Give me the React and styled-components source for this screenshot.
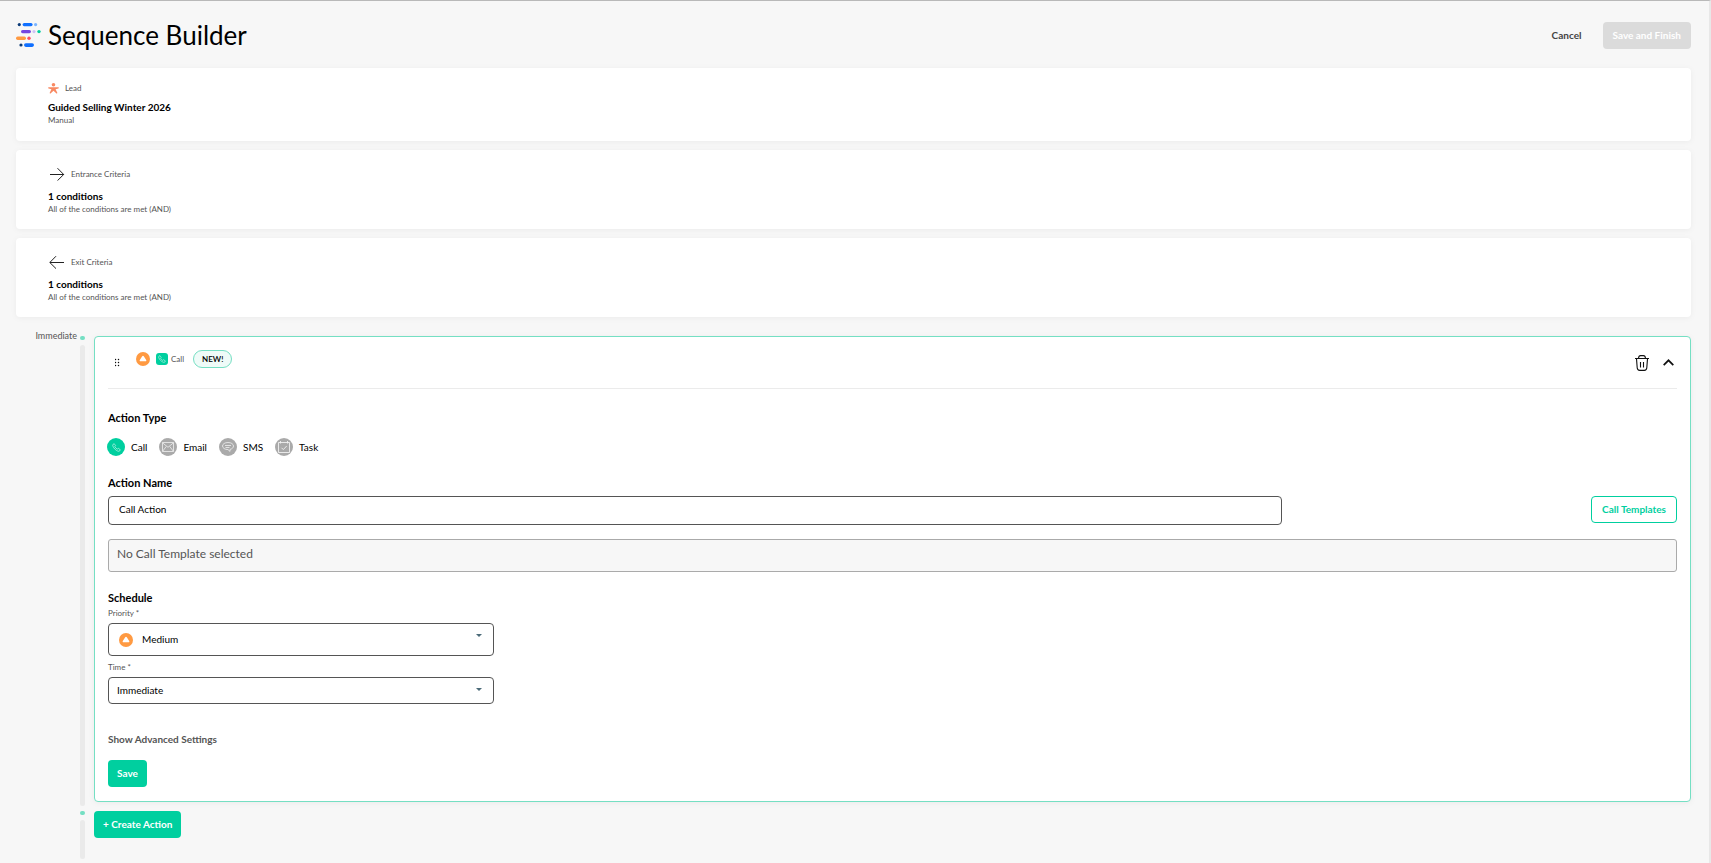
import * as React from "react"
import styled, { createGlobalStyle, css } from "styled-components"



const GlobalStyle = createGlobalStyle`
* {
  box-sizing: border-box;
}

body {
  margin: 0;
  background: #f7f7f7;
  color: #000;
  font-family: Lato, "Noto Sans", sans-serif;
  font-size: 10px;
  line-height: 14px;
}

button, input, select {
  font: inherit;
  color: inherit;
}

h1, h2, h3, p {
  margin: 0;
}
`

// Styled Components
const Main = styled.main`
min-height: 100vh;
border-top: 1px solid #b9b9b9;
border-right: 2px solid #e8e8e8;
padding: 0 18px 2px 16px;
display: flex;
flex-direction: column;
`

const Header = styled.header`
height: 67px;
padding-top: 2px;
display: flex;
align-items: center;
gap: 7px;

h1 {
  flex: 1;
  padding-bottom: 1px;
  font-size: 26px;
  line-height: 36px;
  font-weight: 400;
}
`

const Button = styled.button`
height: 27px;
padding: 0 8px 2px;
border: 1px solid transparent;
border-radius: 4px;
background: #00cf9f;
color: #fff;
font-weight: 700;
white-space: nowrap;
cursor: pointer;

${({ $variant }) => $variant === "outline" && css`
  padding: 0 10px 2px;
  background: #fff;
  border-color: #00cf9f;
  color: #00cf9f;
`}

${({ $variant }) => $variant === "text" && css`
  background: none;
  color: #444;
  margin-right: 5px;
`}

&:disabled {
  padding: 0 9px 2px;
  background: #dbdbdb;
  color: #fff;
  cursor: default;
}
`

const Card = styled.section`
margin-bottom: 9px;
padding: ${({ $tall }) => ($tall ? "15px 32px 14px" : "13px 32px 15px")};
background: #fff;
border-radius: 4px;
box-shadow: 0 1px 6px rgba(0, 0, 0, 0.05);

h2 {
  font-size: 10px;
  line-height: 14px;
}

p {
  color: #555;
  font-size: 8px;
  line-height: 12px;
}
`

const CardLabel = styled.div`
display: flex;
align-items: center;
gap: 6px;
height: ${({ $tall }) => ($tall ? "17px" : "14px")};
margin-bottom: ${({ $tall }) => ($tall ? "7px" : "5px")};
color: #555;
font-size: 8px;
line-height: 12px;
`

const Timeline = styled.div`
margin-top: 10px;
display: grid;
grid-template-columns: 61px 5px 1fr;
column-gap: 3px;
row-gap: 9px;
`

const When = styled.span`
color: #555;
font-size: 9px;
line-height: 12px;
height: 1px;
margin-top: -6px;
text-align: right;
`

const Rail = styled.div`
display: flex;
flex-direction: column;
gap: 5px;
margin-bottom: -4px;

&::before {
  content: "";
  height: 4px;
  border-radius: 2px;
  background: #75dfc3;
}

&::after {
  content: "";
  flex: 1;
  border-radius: 3px;
  background: #eaeaea;
}
`

const Step = styled.div`
margin-left: 6px;
min-height: ${({ $last }) => ($last ? "44px" : "0")};
`

const ActionCard = styled.form`
border: 1px solid #75dfc3;
border-radius: 4px;
background: #fff;
padding: 0 13px 14px;
box-shadow: 0 1px 6px rgba(0, 0, 0, 0.05);

h3 {
  font-size: 11px;
  line-height: 16px;
}
`

const ActionHeader = styled.div`
height: 52px;
border-bottom: 1px solid #ebebeb;
display: flex;
align-items: center;
padding: 0 3px 0 7px;
`

const Tags = styled.div`
flex: 1;
display: flex;
align-items: center;
gap: 6px;
padding: 0 0 7px 16px;
color: #555;
font-size: 8px;
`

const CallTag = styled.span`
display: flex;
align-items: center;
gap: 3px;
`

const Badge = styled.span`
margin-left: 3px;
padding: 1px 8px;
border: 1px solid #75dfc3;
border-radius: 9px;
background: #effbf8;
color: #000;
font-weight: 600;
`

const IconButton = styled.button`
display: flex;
align-items: center;
padding: 0;
border: 0;
margin-left: ${({ $gap }) => $gap || 0}px;
background: none;
cursor: pointer;
`

const Square = styled.span`
width: 12px;
height: 12px;
border-radius: 3px;
background: #00cf9f;
display: grid;
place-items: center;
`

const TypeGroup = styled.fieldset`
margin: 21px 0 0 -1px;
padding: 0;
border: 0;
min-width: 0;
display: flex;
flex-wrap: wrap;
gap: 12px;

legend {
  padding: 0 0 0 1px;
  margin-bottom: 12px;
  font-size: 11px;
  line-height: 16px;
  font-weight: 700;
}
`

const TypeOption = styled.label`
display: flex;
align-items: center;
gap: 6px;
cursor: pointer;

input {
  appearance: none;
  position: absolute;
  margin: 0;
}

input:checked + span {
  background: #00cf9f;
}
`

const Circle = styled.span`
width: 18px;
height: 18px;
border-radius: 50%;
background: #aaa;
display: grid;
place-items: center;
`

const FieldTitle = styled.label`
display: block;
margin-top: 19px;
font-size: 11px;
line-height: 16px;
font-weight: 700;
`

const NameRow = styled.div`
display: flex;
justify-content: space-between;
align-items: flex-start;
margin-top: 5px;
`

const NameInput = styled.input`
width: calc(75% - 3px);
height: 29px;
padding: 0 10px 3px;
border: 1px solid #555;
border-radius: 4px;
background: #fff;
`

const Template = styled.p`
margin-top: 14px;
height: 33px;
padding: 6px 8px;
border: 1px solid #aaa;
border-radius: 3px;
background: #f7f7f7;
color: #555;
font-size: 12px;
line-height: 16px;
`

const Schedule = styled.div`
width: 386px;
max-width: 100%;
margin-top: 18px;
display: flex;
flex-direction: column;
`

const SmallLabel = styled.label`
color: #555;
font-size: 8px;
line-height: 10px;
margin: ${({ $first }) => ($first ? "2px 0 5px" : "6px 0 5px")};
`

const SelectBox = styled.div`
display: grid;
align-items: center;
height: ${({ $tall }) => ($tall ? "33px" : "27px")};

> * {
  grid-area: 1 / 1;
}

select {
  appearance: none;
  height: 100%;
  padding: 0 8px 2px ${({ $tall }) => ($tall ? "33px" : "8px")};
  border: 1px solid #555;
  border-radius: 4px;
  background: #fff;
}
`

const Lead = styled.span`
display: flex;
padding-left: 11px;
pointer-events: none;
z-index: 1;
`

const Caret = styled.span`
justify-self: end;
margin-right: 12px;
margin-bottom: ${({ $raised }) => ($raised ? "8px" : "2px")};
border: 3px solid transparent;
border-top-color: #4b6a78;
border-bottom: 0;
pointer-events: none;
`

const Advanced = styled.button`
display: block;
margin: 28px 0 14px;
padding: 0;
border: 0;
background: none;
color: #555;
font-weight: 700;
cursor: pointer;
`



// Icons
const Logo = () => (
  <svg width="25" height="25" viewBox="0 0 25 25">
    <circle cx="3.3" cy="1.6" r="1.6" fill="#0b3b78" />
    <rect x="6.6" y="0" width="10" height="3.2" rx="1.6" fill="#0f6fff" />
    <circle cx="19.6" cy="1.6" r="1.6" fill="#7ab4ff" />
    <rect x="5" y="7" width="10" height="3.2" rx="1.6" fill="#7546e0" />
    <circle cx="18" cy="8.6" r="1.6" fill="#cfc2f5" />
    <circle cx="23" cy="8.6" r="1.7" fill="#00cf9f" />
    <rect x="0" y="13.6" width="10" height="3.4" rx="1.7" fill="#ff9a42" />
    <circle cx="13" cy="15.2" r="1.7" fill="#ff4f5e" />
    <circle cx="5" cy="22" r="1.6" fill="#0b3b78" />
    <rect x="8" y="20.3" width="10" height="3.6" rx="1.8" fill="#0f6fff" />
  </svg>
)

const PersonIcon = () => (
  <svg width="11" height="11" viewBox="0 0 11 11" fill="#f88962">
    <circle cx="5.5" cy="1.8" r="1.8" />
    <path d="M.6 4.2h9.8c.6 0 .6 1 0 1.2L7.6 6.2l1.7 3.6c.2.7-.7 1-1.1.5L5.5 7.8l-2.7 2.5c-.4.5-1.3.2-1.1-.5l1.7-3.6L.6 5.4c-.6-.2-.6-1.2 0-1.2z" />
  </svg>
)

const ArrowIcon = ({ left }) => (
  <svg width="17" height="14" viewBox="0 0 17 14" fill="none" stroke="#222" strokeWidth="1">
    {left ? <path d="M16 7.5H2M8 1.2 1.8 7.5 8 13.6" /> : <path d="M2 7.5h14M9.5 1.2l6.2 6.3-6.2 6.1" />}
  </svg>
)

const DragIcon = () => (
  <svg width="5" height="9" viewBox="0 0 5 9" fill="#111" stroke="#111" strokeWidth=".3">
    <path d="M0 1h1v1H0zM3 1h1v1H3zM0 4h1v1H0zM3 4h1v1H3zM0 7h1v1H0zM3 7h1v1H3z" />
  </svg>
)

const PriorityIcon = () => (
  <svg width="14" height="14" viewBox="0 0 14 14">
    <circle cx="7" cy="7" r="7" fill="#ff9a42" />
    <path d="M6.2 4.3a1 1 0 0 1 1.6 0l2.4 3.6c.4.6 0 1.3-.8 1.3H4.6c-.8 0-1.2-.7-.8-1.3z" fill="#fff" />
  </svg>
)

const PhoneIcon = ({ size }) => (
  <svg width={size} height={size} viewBox="0 0 10 10" fill="none" stroke="#fff" strokeWidth=".6" strokeLinejoin="round">
    <path d="M1.2 1.500 2.500.8l1.500 2.300-.9.900c.6 1.200 1.500 2.100 2.800 2.800l1-.9 2.300 1.500-.6 1.300c-.5.6-1.200.700-2 .400C4 8 1.900 5.900.900 3.300c-.3-.7-.2-1.300.3-1.800z" />
  </svg>
)

const MailIcon = () => (
  <svg width="12" height="10" viewBox="0 0 12 10" fill="none" stroke="#f0f0f0" strokeWidth=".8">
    <path d="M.5.5h11v9H.5zM.5.8 6 5.3 11.5.8M.7 9.2 4.2 4.500M11.3 9.200 7.800 4.500" />
  </svg>
)

const SmsIcon = () => (
  <svg width="12" height="10" viewBox="0 0 12 10" fill="none" stroke="#f0f0f0" strokeWidth=".8">
    <path d="M6 .5c3.100 0 5.500 1.500 5.500 3.500 0 1.700-1.500 3-3.500 3.400v2L6 7.600C2.900 7.600.5 6 .5 4S2.900.5 6 .5zM3 3.500h6M3.500 5.500h4" />
  </svg>
)

const TaskIcon = () => (
  <svg width="12" height="12" viewBox="0 0 12 12" fill="none" stroke="#f0f0f0" strokeWidth=".9">
    <path d="M.5 1.5h11v10H.5zM2.500 0v2.5M9.500 0v2.5M3.5 6.8l1.800 1.800 3.400-3.600" />
  </svg>
)

const TrashIcon = () => (
  <svg width="14" height="16" viewBox="0 0 14 16" fill="none" stroke="#111" strokeWidth="1.1">
    <path d="M0 3.5h14M3.5 3.3C3.7 1.5 4.5.6 5.5.6h3c1 0 1.8.9 2 2.7M1.5 3.6l.7 9.2c.1 1.7 1 2.6 2.5 2.6h4.6c1.5 0 2.4-.9 2.5-2.6l.7-9.2M5.5 7v5.5M8.5 7v5.5" />
  </svg>
)

const ChevronIcon = () => (
  <svg width="11" height="7" viewBox="0 0 11 7" fill="none" stroke="#111" strokeWidth="1.7">
    <path d="M.7 6.2 5.5 1.3l4.8 4.9" />
  </svg>
)

const TYPES = [
  { name: "Call", icon: <PhoneIcon size={9} /> },
  { name: "Email", icon: <MailIcon /> },
  { name: "SMS", icon: <SmsIcon /> },
  { name: "Task", icon: <TaskIcon /> },
]



// markup
const App = () => {
  const [type, setType] = React.useState("Call")

  return (
    <Main>
      <GlobalStyle/>
      <Header>
        <Logo/>
        <h1>Sequence Builder</h1>
        <Button $variant="text">Cancel</Button>
        <Button disabled>Save and Finish</Button>
      </Header>

      <Card>
        <CardLabel><PersonIcon/>Lead</CardLabel>
        <h2>Guided Selling Winter 2026</h2>
        <p>Manual</p>
      </Card>
      <Card $tall>
        <CardLabel $tall><ArrowIcon/>Entrance Criteria</CardLabel>
        <h2>1 conditions</h2>
        <p>All of the conditions are met (AND)</p>
      </Card>
      <Card $tall>
        <CardLabel $tall><ArrowIcon left/>Exit Criteria</CardLabel>
        <h2>1 conditions</h2>
        <p>All of the conditions are met (AND)</p>
      </Card>

      <Timeline>
        <When>Immediate</When>
        <Rail/>
        <Step>
          <ActionCard onSubmit={(e) => e.preventDefault()}>
            <ActionHeader>
              <DragIcon/>
              <Tags>
                <PriorityIcon/>
                <CallTag><Square><PhoneIcon size={8}/></Square>Call</CallTag>
                <Badge>NEW!</Badge>
              </Tags>
              <IconButton type="button" aria-label="Delete action"><TrashIcon/></IconButton>
              <IconButton type="button" aria-label="Collapse" $gap={14}><ChevronIcon/></IconButton>
            </ActionHeader>

            <TypeGroup>
              <legend>Action Type</legend>
              {TYPES.map(({ name, icon }) => (
                <TypeOption key={name}>
                  <input type="radio" name="type" checked={type === name} onChange={() => setType(name)} />
                  <Circle>{icon}</Circle>
                  {name}
                </TypeOption>
              ))}
            </TypeGroup>

            <FieldTitle htmlFor="action-name">Action Name</FieldTitle>
            <NameRow>
              <NameInput id="action-name" defaultValue="Call Action" />
              <Button type="button" $variant="outline">Call Templates</Button>
            </NameRow>
            <Template>No Call Template selected</Template>

            <Schedule>
              <h3>Schedule</h3>
              <SmallLabel $first htmlFor="priority">Priority *</SmallLabel>
              <SelectBox $tall>
                <select id="priority" defaultValue="Medium">
                  <option>High</option>
                  <option>Medium</option>
                  <option>Low</option>
                </select>
                <Lead><PriorityIcon/></Lead>
                <Caret $raised/>
              </SelectBox>
              <SmallLabel htmlFor="time">Time *</SmallLabel>
              <SelectBox>
                <select id="time" defaultValue="Immediate">
                  <option>Immediate</option>
                  <option>Later</option>
                </select>
                <Caret/>
              </SelectBox>
            </Schedule>

            <Advanced type="button">Show Advanced Settings</Advanced>
            <Button>Save</Button>
          </ActionCard>
        </Step>

        <span/>
        <Rail/>
        <Step $last>
          <Button>+ Create Action</Button>
        </Step>
      </Timeline>
    </Main>
  )
}

export default App
